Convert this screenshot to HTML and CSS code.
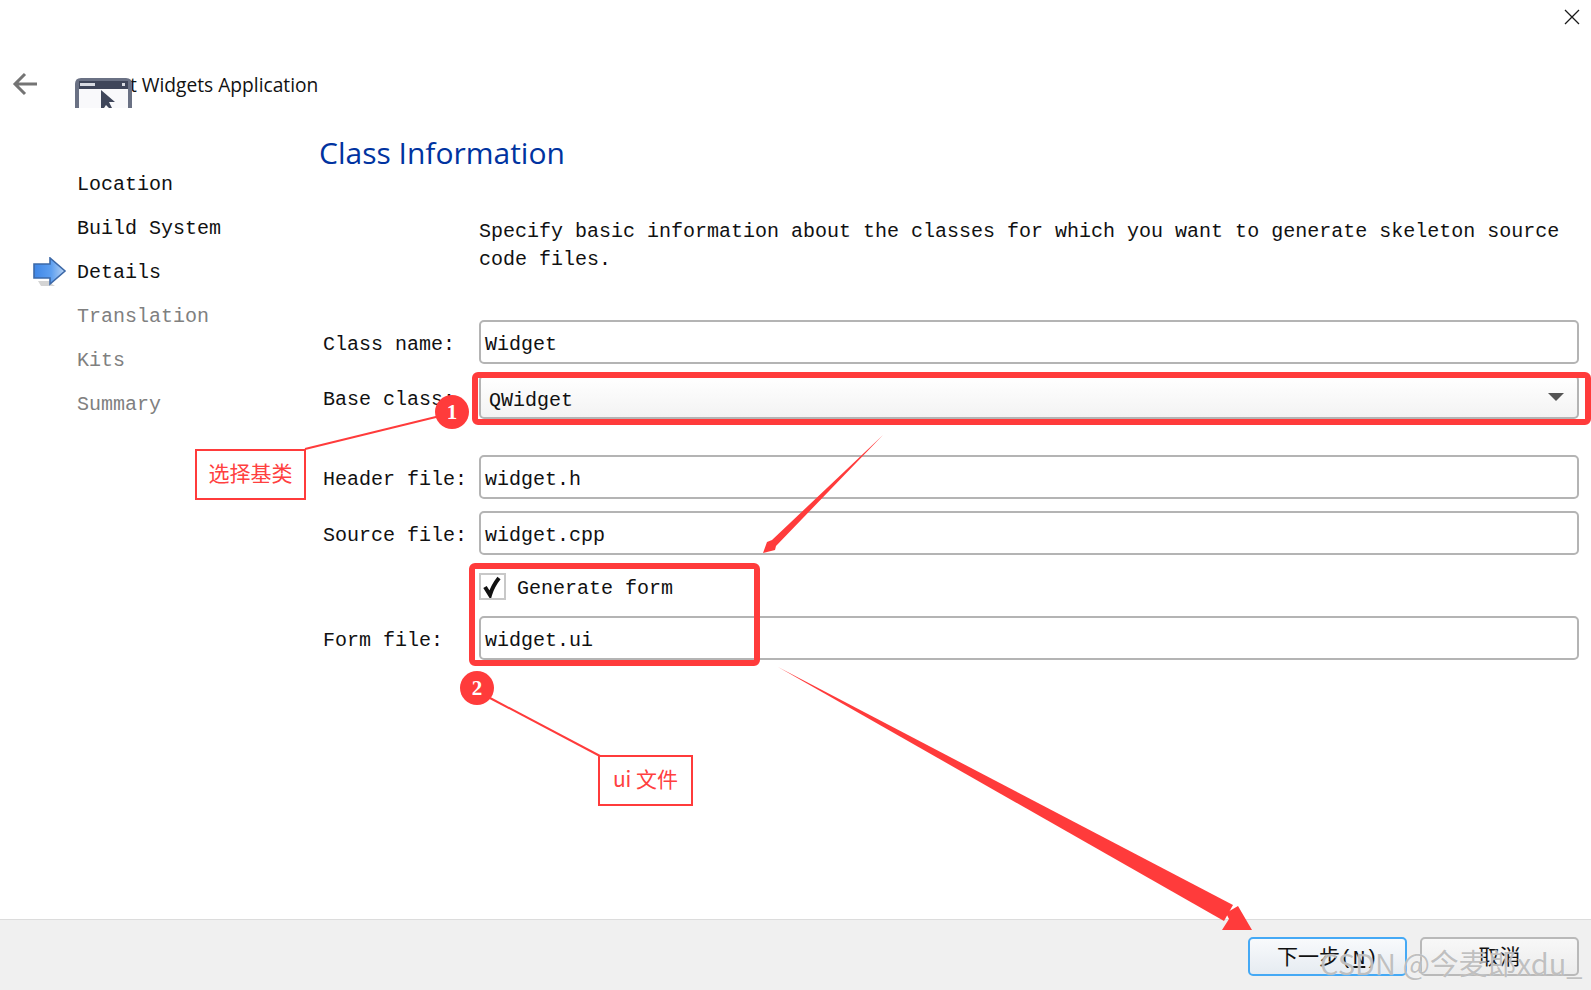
FILE: index.html
```html
<!DOCTYPE html>
<html lang="en">
  <head>
    <meta charset="UTF-8" />
    <title>Qt Widgets Application</title>
    <link rel="stylesheet" href="styles.css">
  </head>
  <body>
    <div class="wizard">
      <div class="close_row">
        <svg class="close_icon" width="16" height="16" viewBox="0 0 16 16"><path d="M1 1 15 15M15 1 1 15" stroke="#1a1a1a" stroke-width="1.3" fill="none"/></svg>
      </div>
      <div class="title_row">
        <svg class="back_icon" width="26" height="24" viewBox="0 0 26 24"><path d="M25 12H3M13 2 3 12l10 10" stroke="#747474" stroke-width="3" fill="none"/></svg>
        <svg class="app_icon" width="57" height="30" viewBox="0 0 57 30">
          <path d="M0 30V6q0-6 6-6h45q6 0 6 6v24z" fill="#6a7184"/>
          <rect x="4" y="3" width="49" height="8" fill="#3f465a"/>
          <rect x="5" y="5" width="15" height="3" fill="#d8dbe2"/>
          <rect x="47" y="5" width="3" height="3" fill="#d8dbe2"/>
          <rect x="4" y="11" width="49" height="19" fill="#f9f9fb"/>
          <path d="M26 12V30h3l2-3 3 3h3l-3-6h6z" fill="#3f465a"/>
        </svg>
        <span class="app_title">Qt Widgets Application</span>
      </div>

      <div class="body">
        <ul class="steps">
          <li class="step">Location</li>
          <li class="step">Build System</li>
          <li class="step step_now">
            <svg class="step_arrow" width="34" height="30" viewBox="0 0 34 30">
              <defs>
                <linearGradient id="blue" x1="0" y1="0" x2="1" y2="0">
                  <stop offset="0" stop-color="#3f86e6"/>
                  <stop offset="0.55" stop-color="#5d9ff0"/>
                  <stop offset="1" stop-color="#b9d3f2"/>
                </linearGradient>
              </defs>
              <path d="M5 24h14v3l3 2H8z" fill="#d4d4d4"/>
              <path d="M1 7h16V1l15 13-15 13v-6H1z" fill="url(#blue)" stroke="#3d69a8" stroke-width="1.6"/>
            </svg>
            Details
          </li>
          <li class="step step_off">Translation</li>
          <li class="step step_off">Kits</li>
          <li class="step step_off">Summary</li>
        </ul>

        <div class="page">
          <h1 class="page_title">Class Information</h1>
          <p class="desc">Specify basic information about the classes for which you want to generate skeleton source code files.</p>

          <div class="row">
            <span class="label">Class name:</span>
            <div class="field">Widget</div>
          </div>
          <div class="row row_base">
            <span class="label">Base class:</span>
            <div class="field combo">QWidget<span class="combo_arrow"></span></div>
          </div>
          <div class="row row_header">
            <span class="label">Header file:</span>
            <div class="field">widget.h</div>
          </div>
          <div class="row row_source">
            <span class="label">Source file:</span>
            <div class="field">widget.cpp</div>
          </div>
          <div class="row row_check">
            <span class="label"></span>
            <div class="check">
              <span class="check_box">
                <svg width="23" height="23" viewBox="0 0 23 23"><path d="M4 12l5 8c2-7 5-12 9-17" stroke="#111" stroke-width="4" fill="none"/></svg>
              </span>
              <span class="check_text">Generate form</span>
            </div>
          </div>
          <div class="row row_form">
            <span class="label">Form file:</span>
            <div class="field">widget.ui</div>
          </div>
        </div>
      </div>

      <div class="footer">
        <button class="btn btn_next">下一步(<u>N</u>)</button>
        <button class="btn">取消</button>
      </div>
    </div>

    <!-- red notes drawn on top of the screenshot -->
    <svg class="notes" width="1591" height="990" viewBox="0 0 1591 990">
      <rect x="475" y="375" width="1113" height="47" rx="3" fill="none" stroke="#ff3b3b" stroke-width="6"/>
      <rect x="472" y="566" width="285" height="97" rx="3" fill="none" stroke="#ff3b3b" stroke-width="6"/>
      <path d="M305 449 440 416" stroke="#ff3b3b" stroke-width="2"/>
      <path d="M490 698 600 756" stroke="#ff3b3b" stroke-width="2"/>
      <path d="M883 435 772 540 767 542 763 553 775 550 776 546z" fill="#ff3b3b"/>
      <path d="M778 667 1224 921 1233 905z" fill="#ff3b3b"/>
      <path d="M1252 930H1222L1229 919 1226 913 1238 906z" fill="#ff3b3b"/>
    </svg>
    <div class="badge badge_one">1</div>
    <div class="badge badge_two">2</div>
    <div class="note note_one">选择基类</div>
    <div class="note note_two">ui 文件</div>
    <div class="watermark">CSDN @今麦郎xdu_</div>
  </body>
</html>
```
FILE: styles.css
```css
html,
body {
  margin: 0;
  height: 100%;
  overflow: hidden;
  background-color: white;
}
body {
  position: relative;
  font-family: "Liberation Mono", "Noto Sans CJK SC", monospace;
  font-size: 20px;
  color: #111;
}
.wizard {
  display: flex;
  flex-direction: column;
  height: 990px;
}
.close_row {
  display: flex;
  justify-content: flex-end;
  height: 60px;
  padding: 9px 11px 0 0;
  box-sizing: border-box;
}
.title_row {
  display: flex;
  height: 48px;
  padding-left: 12px;
  overflow: hidden;
}
.back_icon {
  margin-top: 12px;
}
.app_icon {
  position: relative;
  z-index: 1;
  margin: 18px 0 0 37px;
}
.app_title {
  margin: 11px 0 0 -17px;
  font-family: "Open Sans", sans-serif;
  font-size: 19.2px;
  line-height: 27px;
  color: #111;
}
.body {
  display: flex;
  flex: 1;
}
.steps {
  width: 290px;
  margin: 0;
  padding: 54px 0 0 33px;
  list-style: none;
}
.step {
  display: flex;
  align-items: center;
  height: 44px;
  padding-left: 44px;
}
.step_now {
  padding-left: 0;
}
.step_arrow {
  width: 34px;
  margin-right: 10px;
}
.step_off {
  color: #808080;
}
.page {
  flex: 1;
  padding: 23px 12px 0 0;
}
.page_title {
  margin: 0 0 0 -4px;
  font-family: "Open Sans", sans-serif;
  font-size: 30px;
  font-weight: 400;
  line-height: 44px;
  color: #0033a0;
}
.desc {
  margin: 43px 0 46px 156px;
  line-height: 28px;
}
.row {
  display: flex;
  align-items: center;
}
.row_base {
  margin-top: 11px;
}
.row_header {
  margin-top: 36px;
}
.row_source {
  margin-top: 12px;
}
.row_check {
  margin-top: 18px;
}
.row_form {
  margin-top: 16px;
}
.label {
  width: 156px;
  flex-shrink: 0;
  padding-top: 4px;
}
.field {
  display: flex;
  align-items: center;
  flex: 1;
  height: 44px;
  padding: 4px 0 0 4px;
  box-sizing: border-box;
  background-color: white;
  border: 2px solid #b4b4b4;
  border-radius: 5px;
}
.combo {
  justify-content: space-between;
  padding: 6px 13px 0 8px;
  background: linear-gradient(#fff, #f3f3f3);
}
.combo_arrow {
  width: 0;
  height: 0;
  margin-top: -6px;
  border-left: 8px solid transparent;
  border-right: 8px solid transparent;
  border-top: 8px solid #555;
}
.check {
  display: flex;
  align-items: center;
  gap: 11px;
}
.check_text {
  padding-top: 4px;
}
.check_box {
  display: flex;
  align-items: center;
  justify-content: center;
  width: 27px;
  height: 27px;
  box-sizing: border-box;
  border: 2px solid #c8c8c8;
}
.footer {
  display: flex;
  justify-content: flex-end;
  gap: 13px;
  height: 71px;
  padding: 17px 12px 0 0;
  box-sizing: border-box;
  background-color: #f0f0f0;
  border-top: 1px solid #dcdcdc;
}
.btn {
  width: 159px;
  height: 39px;
  padding: 0 0 3px;
  font-family: "Liberation Mono", "Noto Sans CJK SC", monospace;
  font-size: 21px;
  color: #111;
  background: linear-gradient(#f8f8f8, #ececec);
  border: 2px solid #b9b9b9;
  border-radius: 5px;
}
.btn_next {
  background: linear-gradient(#f8fafc, #e6ebf1);
  border-color: #45a9f5;
}
.notes {
  position: absolute;
  top: 0;
  left: 0;
  pointer-events: none;
}
.badge {
  position: absolute;
  width: 34px;
  height: 34px;
  font-family: "Liberation Serif", serif;
  font-size: 21px;
  font-weight: 700;
  line-height: 34px;
  text-align: center;
  color: white;
  background-color: #ff3b3b;
  border-radius: 50%;
}
.badge_one {
  left: 435px;
  top: 395px;
}
.badge_two {
  left: 460px;
  top: 671px;
}
.note {
  position: absolute;
  height: 51px;
  box-sizing: border-box;
  font-family: "Noto Sans CJK SC", sans-serif;
  font-size: 21px;
  line-height: 43px;
  text-align: center;
  color: #ff4040;
  background-color: white;
  border: 2px solid #ff3b3b;
}
.note_one {
  left: 195px;
  top: 449px;
  width: 111px;
}
.note_two {
  left: 598px;
  top: 755px;
  width: 95px;
}
.watermark {
  position: absolute;
  left: 1320px;
  top: 944px;
  font-family: "Noto Sans CJK SC", sans-serif;
  font-size: 29px;
  line-height: 36px;
  white-space: nowrap;
  color: rgba(130, 130, 130, 0.5);
  text-shadow: 0 0 1px white;
}
```
